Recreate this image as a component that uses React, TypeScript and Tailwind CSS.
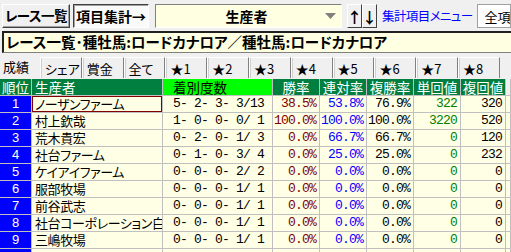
import React from "react";

interface Row {
  rank: number;
  name: string;
  record: string;
  win: string;
  ren: string;
  fuku: string;
  tan: string;
  fukuKai: string;
}

const rows: Row[] = [
  { rank: 1, name: "ノーザンファーム", record: "5- 2- 3- 3/13", win: "38.5%", ren: "53.8%", fuku: "76.9%", tan: "322", fukuKai: "320" },
  { rank: 2, name: "村上欽哉", record: "1- 0- 0- 0/ 1", win: "100.0%", ren: "100.0%", fuku: "100.0%", tan: "3220", fukuKai: "520" },
  { rank: 3, name: "荒木貴宏", record: "0- 2- 0- 1/ 3", win: "0.0%", ren: "66.7%", fuku: "66.7%", tan: "0", fukuKai: "120" },
  { rank: 4, name: "社台ファーム", record: "0- 1- 0- 3/ 4", win: "0.0%", ren: "25.0%", fuku: "25.0%", tan: "0", fukuKai: "232" },
  { rank: 5, name: "ケイアイファーム", record: "0- 0- 0- 2/ 2", win: "0.0%", ren: "0.0%", fuku: "0.0%", tan: "0", fukuKai: "0" },
  { rank: 6, name: "服部牧場", record: "0- 0- 0- 1/ 1", win: "0.0%", ren: "0.0%", fuku: "0.0%", tan: "0", fukuKai: "0" },
  { rank: 7, name: "前谷武志", record: "0- 0- 0- 1/ 1", win: "0.0%", ren: "0.0%", fuku: "0.0%", tan: "0", fukuKai: "0" },
  { rank: 8, name: "社台コーポレーション白老", record: "0- 0- 0- 1/ 1", win: "0.0%", ren: "0.0%", fuku: "0.0%", tan: "0", fukuKai: "0" },
  { rank: 9, name: "三嶋牧場", record: "0- 0- 0- 1/ 1", win: "0.0%", ren: "0.0%", fuku: "0.0%", tan: "0", fukuKai: "0" },
  { rank: 10, name: "", record: "", win: "", ren: "", fuku: "", tan: "", fukuKai: "" },
];

const tabs = ["シェア", "賞金", "全て", "★1", "★2", "★3", "★4", "★5", "★6", "★7", "★8"];

const jp = "font-['Noto_Sans_CJK_JP',sans-serif] [font-feature-settings:'palt']";
const mono = "font-['Liberation_Mono',monospace] text-[13px] tracking-[-0.8px]";
const cell = "h-[17px] shrink-0 border-r border-b border-[#c0c0c0] overflow-hidden whitespace-nowrap leading-[16px]";

const App = () => {
  return (
    <div className={`w-[511px] h-[252px] overflow-hidden bg-[#f0f0f0] ${jp}`}>
      {/* toolbar */}
      <div className="flex h-[24px] mt-[4px] items-stretch text-[14px] leading-none whitespace-nowrap">
        <div className="ml-[2px] w-[68px] flex items-center justify-center font-bold text-[13.5px] tracking-[-0.5px] border border-t-white border-l-white border-b-[#404040] border-r-[#404040] shadow-[inset_-1px_-1px_0_#a0a0a0]">
          レース一覧
        </div>
        <div className="ml-[3px] w-[76px] flex items-center justify-center font-bold bg-[#fafafa] border border-t-[#404040] border-l-[#404040] border-b-white border-r-white shadow-[inset_1px_1px_0_#a0a0a0]">
          項目集計→
        </div>
        <div className="ml-[6px] w-[187px] flex items-center bg-[#ffffe1] border border-t-[#808080] border-l-[#808080] border-b-white border-r-white">
          <span className="flex-1 text-center font-bold pl-[12px]">生産者</span>
          <svg width="11" height="6" viewBox="0 0 11 6" className="mr-[5px]">
            <polygon points="0,0 11,0 5.5,6" fill="#808080" />
          </svg>
        </div>
        <div className="ml-[5px] w-[15px] flex items-center justify-center font-bold text-[15px] border border-t-white border-l-white border-b-[#404040] border-r-[#404040]">
          ↑
        </div>
        <div className="w-[15px] flex items-center justify-center font-bold text-[15px] border border-t-white border-l-white border-b-[#404040] border-r-[#404040]">
          ↓
        </div>
        <div className="ml-[5px] shrink-0 flex items-center text-[#0000ff] text-[12.5px] tracking-[-0.6px]">集計項目メニュー</div>
        <div className="ml-[4px] flex-1 flex items-center pl-[7px] bg-white border border-[#a0a0a0] text-[13px] overflow-hidden">
          全項目
        </div>
      </div>

      {/* title */}
      <div className="mt-[3px] ml-[2px] h-[22px] flex items-center bg-[#ffffe1] border-t-2 border-l-2 border-b border-t-[#202020] border-l-[#202020] border-b-[#808080] pl-[2px] text-[14.5px] font-bold whitespace-nowrap leading-none">
        レース一覧･種牡馬:ロードカナロア／種牡馬:ロードカナロア
      </div>

      {/* tabs */}
      <div className="mt-[3px] h-[23px] flex items-start text-[13px] leading-none whitespace-nowrap">
        <div className="w-[40px] h-[19px] flex items-center pl-[3px] pt-[1px]">成績</div>
        {tabs.map((t, i) => (
          <div
            key={i}
            className="w-[41.8px] h-[21px] mt-[1px] flex items-center pl-[4px] border-l border-l-white border-r border-r-[#808080] border-t border-t-white shadow-[inset_1px_0_0_#d0d0d0]"
          >
            {t}
          </div>
        ))}
      </div>

      {/* grid */}
      <div className="text-[13px]">
        <div className="flex text-[13.5px]">
          <div className={`${cell} w-[32px] bg-[#007f40] text-white pl-[2px]`}>順位</div>
          <div className={`${cell} w-[131px] bg-[#007f40] text-white pl-[3px]`}>生産者</div>
          <div className={`${cell} w-[110px] bg-[#00ff00] text-black pl-[10px]`}>着別度数</div>
          <div className={`${cell} w-[47px] bg-[#007f40] text-white text-center`}>勝率</div>
          <div className={`${cell} w-[47px] bg-[#007f40] text-white text-center`}>連対率</div>
          <div className={`${cell} w-[47px] bg-[#007f40] text-white text-center`}>複勝率</div>
          <div className={`${cell} w-[47px] bg-[#007f40] text-white text-center`}>単回値</div>
          <div className={`${cell} w-[45px] bg-[#007f40] text-white text-center`}>複回値</div>
          <div className={`${cell} flex-1 bg-[#f0f0f0]`}></div>
        </div>
        {rows.map((r, i) => (
          <div key={i} className="flex bg-[#ffffe6]">
            <div className={`${cell} w-[32px] bg-[#0000ff] text-white text-center font-['Liberation_Sans',sans-serif]`}>{r.rank}</div>
            <div className={`${cell} w-[131px] pl-[3px] tracking-[-0.4px] ${i === 0 ? "shadow-[inset_0_0_0_1px_#800000]" : ""}`}>{r.name}</div>
            <div className={`${cell} w-[110px] pl-[10px] ${mono}`}>{r.record}</div>
            <div className={`${cell} w-[47px] text-right pr-[3px] text-[#800000] ${mono}`}>{r.win}</div>
            <div className={`${cell} w-[47px] text-right pr-[3px] text-[#0000ff] ${mono}`}>{r.ren}</div>
            <div className={`${cell} w-[47px] text-right pr-[3px] text-black ${mono}`}>{r.fuku}</div>
            <div className={`${cell} w-[47px] text-right pr-[3px] text-[#008000] ${mono}`}>{r.tan}</div>
            <div className={`${cell} w-[45px] text-right pr-[3px] text-black ${mono}`}>{r.fukuKai}</div>
            <div className={`${cell} flex-1`}></div>
          </div>
        ))}
      </div>
    </div>
  );
};

export default App;
